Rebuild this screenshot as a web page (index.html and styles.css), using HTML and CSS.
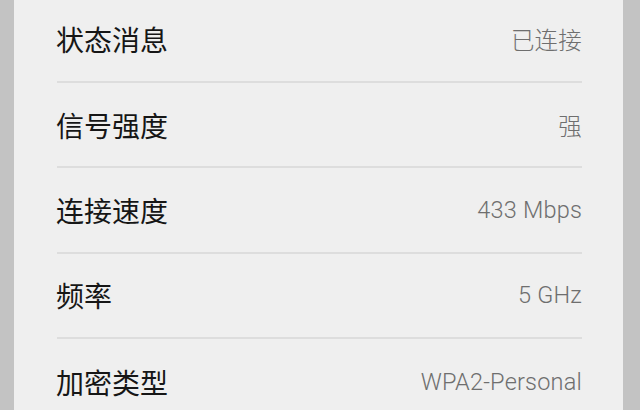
FILE: index.html
```html
<!DOCTYPE html>
<html lang="zh-CN">
<head>
<meta charset="utf-8">
<link rel="stylesheet" href="styles.css">
</head>
<body>
<div class="screen">
  <div class="card">
    <div class="row"><span class="label">状态消息</span><span class="value">已连接</span></div>
    <div class="row"><span class="label">信号强度</span><span class="value">强</span></div>
    <div class="row"><span class="label">连接速度</span><span class="value">433 Mbps</span></div>
    <div class="row"><span class="label">频率</span><span class="value">5 GHz</span></div>
    <div class="row"><span class="label">加密类型</span><span class="value">WPA2-Personal</span></div>
  </div>
</div>
</body>
</html>
```

FILE: styles.css
```css
html, body {
  margin: 0;
  padding: 0;
  width: 640px;
  height: 410px;
  overflow: hidden;
  background: #c3c3c3;
}
.screen {
  display: flex;
  height: 410px;
  padding: 0 17px 0 14px;
  box-sizing: border-box;
}
.card {
  flex: 1;
  background: #efefef;
  padding: 0 41px 0 43px;
  display: flex;
  flex-direction: column;
}
.row {
  flex: none;
  height: 85.33px;
  box-sizing: border-box;
  border-bottom: 2px solid #dddddd;
  display: flex;
  align-items: center;
  justify-content: space-between;
}
.row:first-child {
  margin-top: -2.33px;
}
.row:last-child {
  border-bottom: none;
}
.label {
  font-family: "Noto Sans CJK SC", sans-serif;
  font-size: 28px;
  color: #161616;
  margin-left: -1px;
}
.value {
  font-family: Roboto, "Noto Sans CJK SC", sans-serif;
  font-size: 23.5px;
  font-weight: 300;
  letter-spacing: 0.2px;
  color: #6e6e6e;
}
```
